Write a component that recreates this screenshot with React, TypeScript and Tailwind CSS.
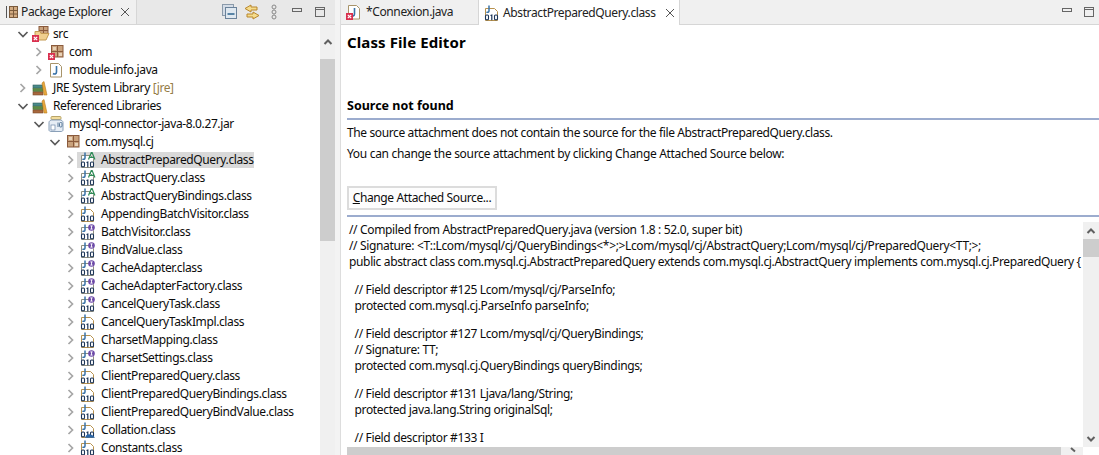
import React from "react";

function Arrow({ open }: { open?: boolean }) {
  return (
    <svg width="12" height="12" viewBox="0 0 12 12" className="shrink-0 mr-[3px]" fill="none">
      {open ? (
        <path d="M1.500 4l4.500 4.500L10.500 4" stroke="#5a5a5a" strokeWidth="1.700" />
      ) : (
        <path d="M3.500 2l4 4-4 4" stroke="#a6a6a6" strokeWidth="1.700" />
      )}
    </svg>
  );
}

function ErrBadge() {
  return (
    <g>
      <rect x="0" y="9" width="7" height="7" fill="#d9304f" />
      <path d="M1.800 10.800l3.400 3.400M5.200 10.800l-3.400 3.400" stroke="#fff" strokeWidth="1.200" />
    </g>
  );
}

function ZeroOneZero() {
  const c = "#1d3557";
  return (
    <g fill="none" stroke={c} strokeWidth="1.100">
      <rect x="1.500" y="10" width="3" height="4.800" rx="1" fill="#fff" />
      <path d="M6.500 10.500l1.300-.5v5.300" strokeWidth="1.200" />
      <rect x="10.500" y="10" width="3" height="4.800" rx="1" fill="#fff" />
    </g>
  );
}

function ClassIcon({ kind }: { kind: "A" | "I" | "C" | "E" }) {
  return (
    <svg width="16" height="16" viewBox="0 0 16 16" className="shrink-0">
      <path d="M1.500 3.500h9l3 3v9h-12z" fill="#fff" stroke={kind === "I" || kind === "A" ? "#8f8f80" : "#b8924e"} />
      <path d="M5 0.500v5.500c0 1.200-1.400 1.600-2.600 1.200" fill="none" stroke="#3a73a8" strokeWidth="1.500" />
      {kind === "A" && (
        <path d="M8.500 7.500l2.800-7h.8l2.800 7M9.800 5.300h4" fill="none" stroke="#2e8b57" strokeWidth="1.200" />
      )}
      {kind === "I" && (
        <g>
          <circle cx="11.500" cy="3.500" r="3.300" fill="#6d4aa8" />
          <path d="M10.300 1.900h2.400M10.300 5.100h2.400M11.500 1.900v3.200" stroke="#fff" strokeWidth="0.900" />
        </g>
      )}
      <ZeroOneZero />
      {kind === "E" && <path d="M5 15.800c1-3 2-3.500 4-3.500s4 .5 6 3.500z" fill="#2a66a8" />}
    </svg>
  );
}

function PkgIcon({ err }: { err?: boolean }) {
  return (
    <svg width="16" height="16" viewBox="0 0 16 16" className="shrink-0">
      <rect x="3.500" y="1.500" width="11.500" height="11.500" fill="#c9a27c" stroke="#8a5a3c" />
      <path d="M9.500 1.500v11.500M3.500 7.500h11.500" stroke="#8a5a3c" />
      <path d="M5 3h3v3H5zM11 9h3v3h-3z" fill="#e8d2b8" />
      {err && <ErrBadge />}
    </svg>
  );
}

function SrcIcon() {
  return (
    <svg width="18" height="16" viewBox="0 0 18 16" className="shrink-0">
      <rect x="7" y="0.500" width="9" height="8" fill="#c9a27c" stroke="#8a5a3c" />
      <path d="M11.500 0.500v8M7 4.500h9" stroke="#8a5a3c" />
      <path d="M3 5.500h5l1 2h8l-3 6.500H3z" fill="#f0cf8e" stroke="#c49a52" />
      <ErrBadge />
    </svg>
  );
}

function JavaIcon({ err }: { err?: boolean }) {
  return (
    <svg width="16" height="16" viewBox="0 0 16 16" className="shrink-0">
      <path d="M2.500 1.500h8l3 3v10.500h-11z" fill="#fff" stroke="#a8946a" />
      <path d="M8.500 4v6c0 2-2 2.500-3.500 1.500" fill="none" stroke="#3a73a8" strokeWidth="1.600" />
      {err && <ErrBadge />}
    </svg>
  );
}

function LibIcon() {
  return (
    <svg width="16" height="16" viewBox="0 0 16 16" className="shrink-0">
      <rect x="1" y="5" width="10" height="3" fill="#4a8a8a" stroke="#2e5e5e" strokeWidth="0.600" />
      <rect x="1" y="8.500" width="10" height="3" fill="#5d8a45" stroke="#3d6a2e" strokeWidth="0.600" />
      <rect x="1" y="12" width="10" height="3" fill="#a8683e" stroke="#7a4a2a" strokeWidth="0.600" />
      <path d="M10 3l2-1.500 3 13.500h-3z" fill="#e8a83c" stroke="#b87c20" strokeWidth="0.600" />
    </svg>
  );
}

function JarIcon() {
  return (
    <svg width="16" height="16" viewBox="0 0 16 16" className="shrink-0">
      <rect x="3" y="0.500" width="10" height="3" rx="1" fill="#f2dc9c" stroke="#b8a468" />
      <path d="M3 4c-2 1-2 2-2 3v7c0 1 1 1.500 2 1.500h10c1 0 2-.5 2-1.500V7c0-1 0-2-2-3z" fill="#e6edf5" stroke="#8aa0b8" />
      <rect x="3" y="9" width="4" height="5" fill="#fff" stroke="#6a86a8" strokeWidth="0.700" />
      <path d="M10 6.500v4.500" stroke="#5a7a9a" />
      <rect x="11.500" y="6.500" width="2.500" height="4.500" rx="1" fill="none" stroke="#5a7a9a" />
    </svg>
  );
}

type Row = { t: string; lvl: number; open?: boolean; icon: React.ReactNode; deco?: string; sel?: boolean };

const cls = (t: string, k: "A" | "I" | "C" | "E", sel?: boolean): Row => ({
  t: t + ".class",
  lvl: 3,
  icon: <ClassIcon kind={k} />,
  sel,
});

const rows: Row[] = [
  { t: "src", lvl: 0, open: true, icon: <SrcIcon /> },
  { t: "com", lvl: 1, icon: <PkgIcon err /> },
  { t: "module-info.java", lvl: 1, icon: <JavaIcon /> },
  { t: "JRE System Library", lvl: 0, icon: <LibIcon />, deco: " [jre]" },
  { t: "Referenced Libraries", lvl: 0, open: true, icon: <LibIcon /> },
  { t: "mysql-connector-java-8.0.27.jar", lvl: 1, open: true, icon: <JarIcon /> },
  { t: "com.mysql.cj", lvl: 2, open: true, icon: <PkgIcon /> },
  cls("AbstractPreparedQuery", "A", true),
  cls("AbstractQuery", "A"),
  cls("AbstractQueryBindings", "A"),
  cls("AppendingBatchVisitor", "C"),
  cls("BatchVisitor", "I"),
  cls("BindValue", "I"),
  cls("CacheAdapter", "I"),
  cls("CacheAdapterFactory", "I"),
  cls("CancelQueryTask", "I"),
  cls("CancelQueryTaskImpl", "C"),
  cls("CharsetMapping", "C"),
  cls("CharsetSettings", "I"),
  cls("ClientPreparedQuery", "C"),
  cls("ClientPreparedQueryBindings", "C"),
  cls("ClientPreparedQueryBindValue", "C"),
  cls("Collation", "E"),
  cls("Constants", "C"),
];

const lvlPad = ["pl-[17px]", "pl-[33px]", "pl-[49px]", "pl-[65px]"];

const code: string[] = [
  "// Compiled from AbstractPreparedQuery.java (version 1.8 : 52.0, super bit)",
  "// Signature: <T::Lcom/mysql/cj/QueryBindings<*>;>Lcom/mysql/cj/AbstractQuery;Lcom/mysql/cj/PreparedQuery<TT;>;",
  "public abstract class com.mysql.cj.AbstractPreparedQuery extends com.mysql.cj.AbstractQuery implements com.mysql.cj.PreparedQuery {",
  "",
  "  // Field descriptor #125 Lcom/mysql/cj/ParseInfo;",
  "  protected com.mysql.cj.ParseInfo parseInfo;",
  "",
  "  // Field descriptor #127 Lcom/mysql/cj/QueryBindings;",
  "  // Signature: TT;",
  "  protected com.mysql.cj.QueryBindings queryBindings;",
  "",
  "  // Field descriptor #131 Ljava/lang/String;",
  "  protected java.lang.String originalSql;",
  "",
  "  // Field descriptor #133 I",
];

function Min() {
  return <div className="w-[10px] h-[4px] border border-[#666]" />;
}
function Max() {
  return (
    <div className="w-[10px] h-[10px] border border-[#666] flex flex-col">
      <div className="h-[2px] border-b border-[#666]" />
    </div>
  );
}
function X() {
  return (
    <svg width="10" height="10" viewBox="0 0 10 10" className="shrink-0">
      <path d="M1 1l8 8M9 1l-8 8" stroke="#555" strokeWidth="1" />
    </svg>
  );
}

function ScrollChevron({ up }: { up?: boolean }) {
  return (
    <svg width="10" height="8" viewBox="0 0 10 8">
      <path d={up ? "M1.500 6l3.500-3.500L8.500 6" : "M1.500 2l3.500 3.500L8.500 2"} fill="none" stroke="#606060" strokeWidth="2" />
    </svg>
  );
}

export default function App() {
  return (
    <div className="w-[1099px] h-[455px] overflow-hidden flex bg-white text-[12px] leading-[16px] text-[#0c0c0c] font-['Noto_Sans',sans-serif] tracking-[-0.38px]">
      <div className="w-[335px] shrink-0 flex flex-col">
        <div className="h-[25px] shrink-0 flex bg-[#e8e8e8] border-b border-[#d6d6d6]">
          <div className="w-[137px] flex items-center bg-[#f0f0f0] border-r border-[#d6d6d6] pl-[5px]">
            <svg width="14" height="14" viewBox="0 0 14 14" className="shrink-0">
              <path d="M1.500 1v12" stroke="#555" />
              <rect x="4.500" y="1.500" width="8" height="11" fill="#d2ab82" stroke="#7a5a3c" />
              <path d="M8.500 1.500v11M4.500 5.500h8M4.500 9h8" stroke="#7a5a3c" />
            </svg>
            <span className="ml-[2px] text-[#222]">Package Explorer</span>
            <span className="ml-[8px] flex"><X /></span>
          </div>
          <div className="flex-1 flex items-center pl-[85px]">
            <svg width="16" height="16" viewBox="0 0 16 16" className="shrink-0">
              <rect x="0.500" y="0.500" width="11" height="11" fill="#d4dce6" stroke="#8a9aaa" />
              <rect x="3.500" y="3.500" width="11" height="11" fill="#dfe8f0" stroke="#6a829a" />
              <path d="M5.500 10h7" stroke="#1f5a86" strokeWidth="1.400" />
            </svg>
            <svg width="16" height="16" viewBox="0 0 16 16" className="ml-[6px] shrink-0">
              <path d="M7 1L1 4.500 7 8V6h6V3H7z" fill="#f5dc8c" stroke="#b8862c" />
              <path d="M9 8l6 3.500L9 15v-2H3v-3h6z" fill="#f5dc8c" stroke="#b8862c" />
            </svg>
            <svg width="6" height="16" viewBox="0 0 6 16" className="ml-[11px] shrink-0">
              <circle cx="3" cy="3" r="2" fill="none" stroke="#888" />
              <circle cx="3" cy="8" r="2" fill="none" stroke="#888" />
              <circle cx="3" cy="13" r="2" fill="none" stroke="#888" />
            </svg>
            <div className="ml-[15px] -mt-[4px]"><Min /></div>
            <div className="ml-[13px]"><Max /></div>
          </div>
        </div>
        <div className="flex-1 flex min-h-0">
          <div className="flex-1 overflow-hidden">
            {rows.map((r) => (
              <div key={r.t} className={`h-[18px] flex items-center ${lvlPad[r.lvl]}`}>
                <Arrow open={r.open} />
                <div className={`flex items-center h-[16px] ${r.sel ? "bg-[#d9d9d9] -ml-[3px] pl-[3px]" : ""}`}>
                  {r.icon}
                  <span className={`whitespace-pre ${r.t === "src" ? "ml-[3px]" : "ml-[5px]"}`}>
                    {r.t}
                    {r.deco && <span className="text-[#957d47]">{r.deco}</span>}
                  </span>
                </div>
              </div>
            ))}
          </div>
          <div className="w-[15px] shrink-0 bg-[#f0f0f0] flex flex-col items-center">
            <div className="h-[34px] shrink-0 w-full flex items-center justify-center">
              <ScrollChevron up />
            </div>
            <div className="h-[182px] w-full bg-[#cdcdcd]" />
          </div>
        </div>
      </div>
      <div className="w-[6px] shrink-0 bg-[#f3f3f3] border-r border-[#dddddd]" />
      <div className="flex-1 min-w-0 flex flex-col">
        <div className="h-[25px] shrink-0 flex bg-[#f0f0f0] border-b border-[#d6d6d6]">
          <div className="w-[137px] flex items-center pl-[5px]">
            <JavaIcon err />
            <span className="ml-[4px] text-[#222]">*Connexion.java</span>
          </div>
          <div className="w-[202px] h-[25px] flex items-center bg-white border-x border-[#d6d6d6] pl-[5px]">
            <ClassIcon kind="C" />
            <span className="ml-[3px] text-[#222]">AbstractPreparedQuery.class</span>
            <span className="ml-[9px] flex"><X /></span>
          </div>
          <div className="flex-1 flex items-center justify-end gap-[12px] pr-[5px]">
            <div className="-mt-[4px]"><Min /></div>
            <Max />
          </div>
        </div>
        <div className="flex-1 min-h-0 flex flex-col pl-[6px]">
          <div className="h-[33px] shrink-0 flex items-center font-bold text-[15px] text-black tracking-[0.1px]">Class File Editor</div>
          <div className="mt-[40px] h-[16px] font-bold text-[12.5px] text-black tracking-[0px]">Source not found</div>
          <div className="mt-[4px] h-[2px] bg-[#9cacce] shrink-0" />
          <div className="mt-[5px] h-[16px]">The source attachment does not contain the source for the file AbstractPreparedQuery.class.</div>
          <div className="mt-[5px] h-[16px] tracking-[-0.32px]">You can change the source attachment by clicking Change Attached Source below:</div>
          <div className="mt-[24px] shrink-0 h-[24px] w-[150px] border-2 border-[#dcdcdc] bg-[#fdfdfd] flex items-center justify-center">
            <span><span className="underline">C</span>hange Attached Source...</span>
          </div>
          <div className="mt-[5px] h-[2px] bg-[#9cacce] shrink-0" />
          <div className="flex-1 min-h-0 flex flex-col">
            <div className="flex-1 min-h-0 flex pt-[5px]">
              <div className="flex-1 min-w-0 overflow-hidden pl-[2px] tracking-[-0.35px]">
                {code.map((l, i) =>
                  l === "" ? (
                    <div key={i} className="h-[12px]" />
                  ) : (
                    <div key={i} className="h-[16px] whitespace-pre">{l}</div>
                  ),
                )}
              </div>
              <div className="w-[16px] shrink-0 bg-[#f0f0f0] flex flex-col items-center">
                <div className="h-[17px] w-full shrink-0 flex items-center justify-center"><ScrollChevron up /></div>
                <div className="h-[18px] w-full shrink-0 bg-[#cdcdcd]" />
                <div className="flex-1" />
                <div className="h-[17px] w-full shrink-0 flex items-center justify-center"><ScrollChevron /></div>
              </div>
            </div>
            <div className="h-[8px] shrink-0 flex">
              <div className="w-[714px] bg-[#cdcdcd]" />
              <div className="flex-1 bg-[#f0f0f0] flex justify-end pr-[5px]">
                <svg width="8" height="8" viewBox="0 0 8 8"><path d="M1 1l4 3.500" fill="none" stroke="#606060" strokeWidth="2" /></svg>
              </div>
              <div className="w-[16px] bg-white" />
            </div>
          </div>
        </div>
      </div>
    </div>
  );
}
